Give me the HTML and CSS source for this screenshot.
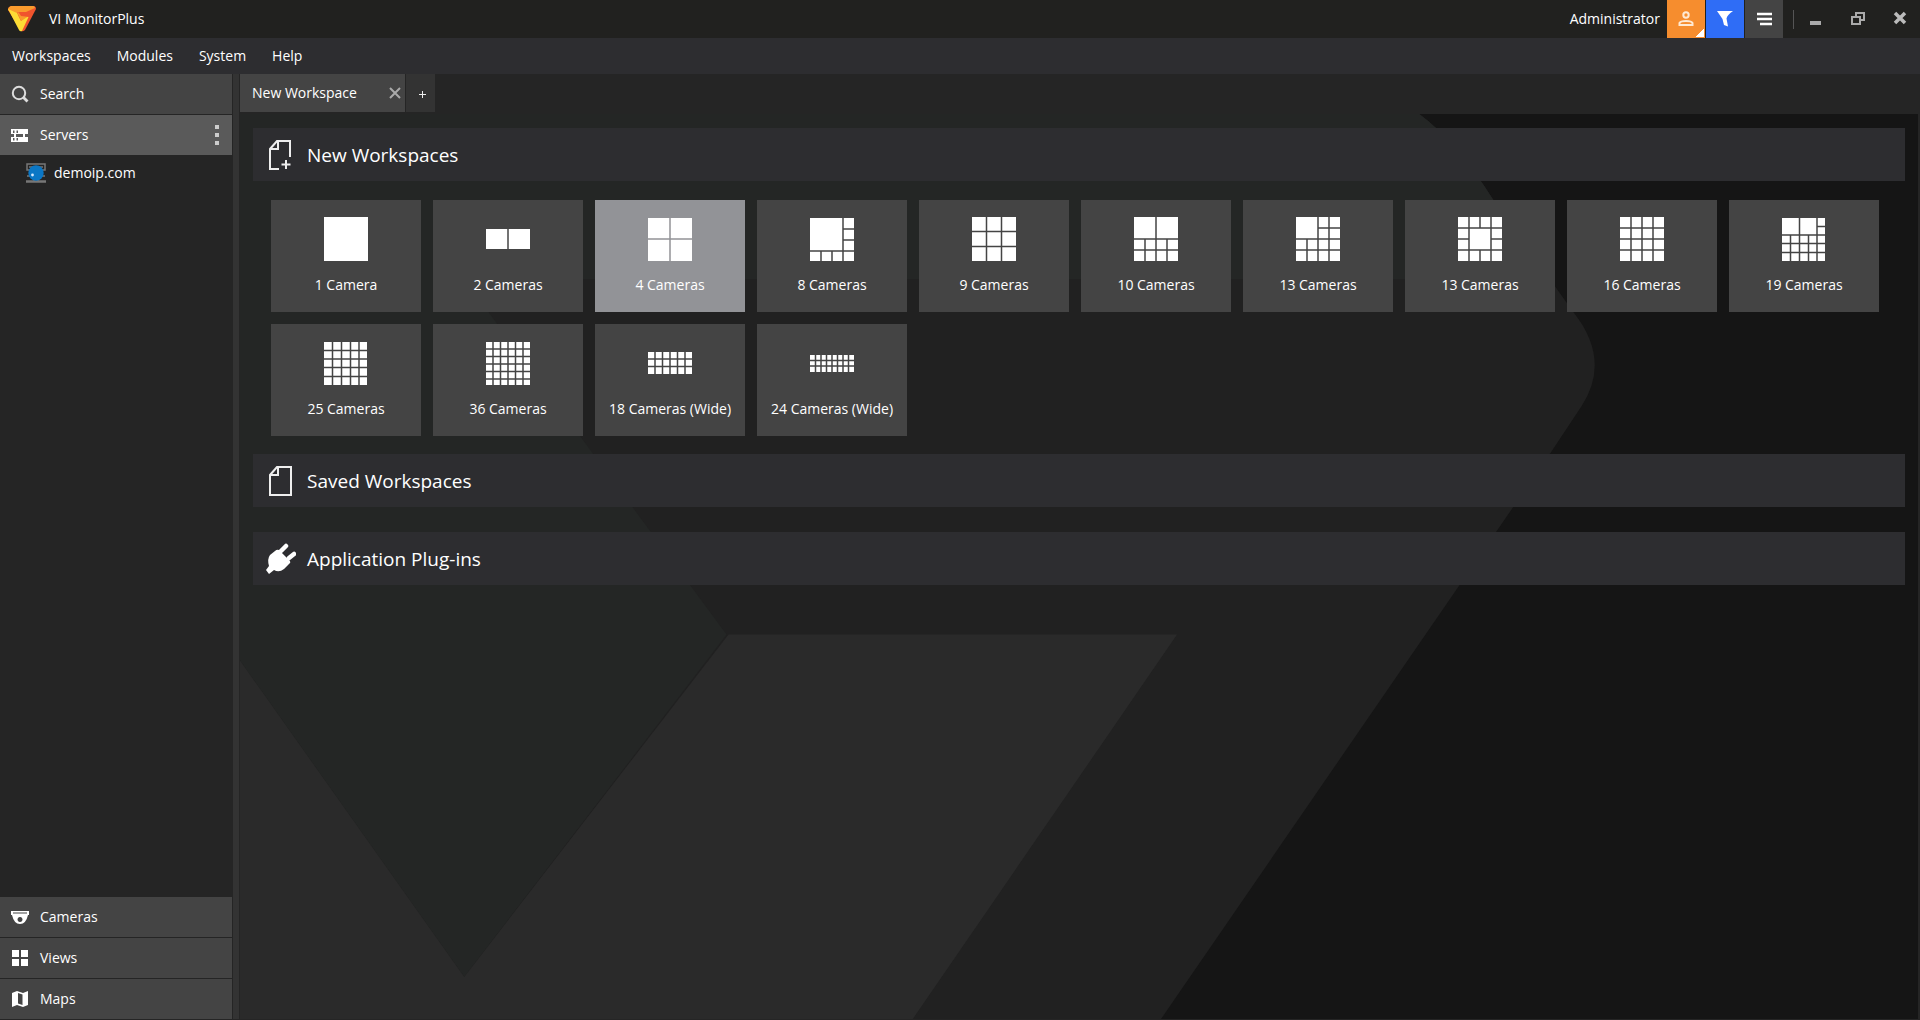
FILE: index.html
```html
<!DOCTYPE html>
<html lang="en">
<head>
<meta charset="utf-8">
<title>VI MonitorPlus</title>
<link rel="stylesheet" href="styles.css">
</head>
<body>
<div class="app">
  <header class="titlebar">
    <svg class="logo" viewBox="0 0 28 26" aria-hidden="true">
      <path fill="#f0542d" d="M3 0h22q3 0 3 3L17 24q-2 2-4 1L0 4q0-3 3-4z"/>
      <path fill="#f99b2d" d="M3 0h22q2 0 2 2L18 6H9l1 5L0 4q0-3 3-4z"/>
      <path fill="#fddc35" d="M0 3l9 4 4 8 6-5h2l-7 15q-2 1-3-1z"/>
      <path fill="#f99b2d" d="M9 6l12 4-8 5z"/>
      <path fill="#f0542d" d="M11 7h14l-4 4-8-1z"/>
    </svg>
    <h1 class="app-name">VI MonitorPlus</h1>
    <span class="user-name">Administrator</span>
    <button class="tool tool-user" aria-label="User account">
      <svg width="16" height="16" viewBox="0 0 16 16" aria-hidden="true"><g fill="none" stroke="#ffe9d2" stroke-width="2"><circle cx="8" cy="4" r="2.700"/><path d="M1.500 14v-2q1-2 6.500-2t6.500 2v2z"/></g></svg>
    </button>
    <button class="tool tool-filter" aria-label="Filter">
      <svg width="16" height="16" viewBox="0 0 16 16" aria-hidden="true"><path fill="#fff" d="M0 0h16q-6 4-6.500 7.500L11 15.500 7 14 5.500 8z"/></svg>
    </button>
    <button class="tool tool-menu" aria-label="Menu">
      <svg width="15" height="14" viewBox="0 0 15 14" aria-hidden="true"><path stroke="#fff" stroke-width="2.500" d="M0 2h15M0 7h15M3 12h12"/></svg>
    </button>
    <span class="divider"></span>
    <button class="win" aria-label="Minimize"><svg width="16" height="16" viewBox="0 0 16 16" aria-hidden="true"><path fill="#aaa" d="M2 10h11v4H2z"/></svg></button>
    <button class="win" aria-label="Restore"><svg width="16" height="16" viewBox="0 0 16 16" aria-hidden="true"><path fill="none" stroke="#aaa" stroke-width="2" d="M6 5V2h8v7h-3M2 6h8v7H2z"/></svg></button>
    <button class="win" aria-label="Close"><svg width="16" height="16" viewBox="0 0 16 16" aria-hidden="true"><path stroke="#bbb" stroke-width="3.500" d="M3 2l10 10M13 2L3 12"/></svg></button>
  </header>

  <nav class="menubar" aria-label="Main menu">
    <button>Workspaces</button>
    <button>Modules</button>
    <button>System</button>
    <button>Help</button>
  </nav>

  <div class="body">
    <aside class="sidebar">
      <button class="panel-head">
        <svg width="20" height="20" viewBox="0 0 20 20" aria-hidden="true"><g fill="none" stroke="#ddd" stroke-width="2"><circle cx="9" cy="9" r="6.200"/><path stroke-width="2.800" d="M13.500 13.500l4 4"/></g></svg>
        <span>Search</span>
      </button>
      <div class="panel-head active">
        <svg width="20" height="20" viewBox="0 0 20 20" aria-hidden="true"><path fill="#fff" fill-rule="evenodd" d="M1 4h17v5h-3v3h3v5H1v-5h3V9H1zM3 5.500V8h1.500V5.500zM6.500 5.500V8H8V5.500zM3 13v2.500h1.500V13zM6.500 13v2.500H8V13zM6 9v3h7V9z"/></svg>
        <span>Servers</span>
        <button class="more" aria-label="Servers options"><i></i><i></i><i></i></button>
      </div>
      <ul class="server-list">
        <li><a href="#">
          <svg width="20" height="20" viewBox="0 0 20 20" aria-hidden="true"><path fill="none" stroke="#777" stroke-width="1.500" d="M1 1h18v6H1zM3 4h14M1 13h18M8 15v4M12 15v4"/><path stroke="#777" stroke-width="2.500" d="M0 18.500h20"/><circle cx="10" cy="10" r="7.700" fill="#0b77c5"/><circle cx="6.500" cy="12" r="1.400" fill="#d5eaff"/></svg>
          <span>demoip.com</span></a></li>
      </ul>
      <button class="panel-head">
        <svg width="20" height="20" viewBox="0 0 20 20" aria-hidden="true"><path fill="#fff" fill-rule="evenodd" d="M1 4h18v4h-1q-2 9-8 9T2 8H1zM3 5.500v1h14v-1zM10 10a2.500 2.500 0 1 0 .01 0z"/></svg>
        <span>Cameras</span>
      </button>
      <button class="panel-head">
        <svg width="20" height="20" viewBox="0 0 20 20" aria-hidden="true"><path fill="#fff" d="M2 2h7v7H2zM11 2h7v7h-7zM2 11h7v7H2zM11 11h7v7h-7z"/></svg>
        <span>Views</span>
      </button>
      <button class="panel-head">
        <svg width="20" height="20" viewBox="0 0 20 20" aria-hidden="true"><path fill="#fff" fill-rule="evenodd" d="M2 4l5-2 6 2 5-2v14l-5 2-6-2-5 2zM8 4v10.500l4.500 1.500V5.500z"/></svg>
        <span>Maps</span>
      </button>
    </aside>
    <div class="splitter"></div>

    <div class="workspace">
      <div class="tabs">
        <div class="tab">
          <span>New Workspace</span>
          <button aria-label="Close tab"><svg width="12" height="12" viewBox="0 0 12 12" aria-hidden="true"><path stroke="#aaa" stroke-width="2" d="M1 1l10 10M11 1L1 11"/></svg></button>
        </div>
        <button class="tab-add" aria-label="New tab"><svg width="7" height="7" viewBox="0 0 7 7" aria-hidden="true"><path stroke="#eee" d="M0 3.500h7M3.500 0v7"/></svg></button>
      </div>

      <main class="pane">
        <svg class="backdrop" viewBox="0 0 1678 904" preserveAspectRatio="xMinYMin slice" aria-hidden="true">
          <path fill="#212121" d="M1178 0Q1216 28 1252 86L1332 198Q1370 246 1340 292L1308 340 920 904H0V0z"/>
          <path fill="#242625" d="M0 0h1178Q1216 28 1252 86L1310 165H224L486 520 224 862 0 546z"/>
          <path fill="#2a2a2a" d="M488 520h448L672 904H0V546L224 862z"/>
        </svg>

        <section>
          <h2>
            <svg width="32" height="32" viewBox="0 0 32 32" aria-hidden="true"><path fill="none" stroke="#eee" stroke-width="2" d="M15 30H6V10l7-8h13v16M7 10h7V3"/><path stroke="#eee" stroke-width="2" d="M22 21v9M17.500 25.500h9"/></svg>
            New Workspaces
          </h2>
          <div class="tiles">
            <button class="tile"><svg viewBox="0 0 44 44" aria-hidden="true"><path class="cells" d="M0 0h44v44H0z"/></svg>1 Camera</button>
            <button class="tile"><svg viewBox="0 0 44 44" aria-hidden="true"><path class="cells" d="M0 12h44v20H0z"/><path class="lines" d="M22 12v20"/></svg>2 Cameras</button>
            <button class="tile selected"><svg viewBox="0 0 44 44" aria-hidden="true"><path class="cells" d="M0 1h44v43H0z"/><path class="lines" d="M22 0v44M0 22h44"/></svg>4 Cameras</button>
            <button class="tile"><svg viewBox="0 0 44 44" aria-hidden="true"><path class="cells" d="M0 1h44v43H0z"/><path class="lines" d="M33 0v44M0 34h44M33 12h11M33 23h11M11 34v10M22 34v10"/></svg>8 Cameras</button>
            <button class="tile"><svg viewBox="0 0 44 44" aria-hidden="true"><path class="cells" d="M0 0h44v44H0z"/><path class="lines" d="M14.500 0v44M29.500 0v44M0 14.500h44M0 29.500h44"/></svg>9 Cameras</button>
            <button class="tile"><svg viewBox="0 0 44 44" aria-hidden="true"><path class="cells" d="M0 0h44v44H0z"/><path class="lines" d="M22 0v44M0 22h44M0 33h44M11 22v22M33 22v22"/></svg>10 Cameras</button>
            <button class="tile"><svg viewBox="0 0 44 44" aria-hidden="true"><path class="cells" d="M0 0h44v44H0z"/><path class="lines" d="M22 0v44M33 0v44M11 22v22M22 11h22M0 22h44M0 33h44"/></svg>13 Cameras</button>
            <button class="tile"><svg viewBox="0 0 44 44" aria-hidden="true"><path class="cells" d="M0 0h44v44H0z"/><path class="lines" d="M11 0v44M33 0v44M0 11h44M0 33h44M22 0v11M22 33v11M0 22h11M33 22h11"/></svg>13 Cameras</button>
            <button class="tile"><svg viewBox="0 0 44 44" aria-hidden="true"><path class="cells" d="M0 0h44v44H0z"/><path class="lines" d="M11 0v44M22 0v44M33 0v44M0 11h44M0 22h44M0 33h44"/></svg>16 Cameras</button>
            <button class="tile"><svg viewBox="0 0 44 44" aria-hidden="true"><path class="cells" d="M0 1h43v43H0z"/><path class="lines" d="M17.500 0v44M35 0v44M8.500 18v26M26.500 18v26M0 18h44M35 9.500h9M0 26.500h44M0 35.500h44"/></svg>19 Cameras</button>
            <button class="tile"><svg viewBox="0 0 44 44" aria-hidden="true"><path class="cells" d="M0 1h43v43H0z"/><path class="lines" d="M8.500 0v44M17.500 0v44M26.500 0v44M35 0v44M0 9.500h44M0 18h44M0 26.500h44M0 35.500h44"/></svg>25 Cameras</button>
            <button class="tile"><svg viewBox="0 0 44 44" aria-hidden="true"><path class="cells" d="M0 1h44v43H0z"/><path class="lines" d="M7 0v44M14.500 0v44M22 0v44M29.500 0v44M37 0v44M0 8h44M0 15.500h44M0 23h44M0 30.500h44M0 38h44"/></svg>36 Cameras</button>
            <button class="tile"><svg viewBox="0 0 44 44" aria-hidden="true"><path class="cells" d="M0 11h44v22H0z"/><path class="lines" d="M7 0v44M14.500 0v44M22 0v44M29.500 0v44M37 0v44M0 18h44M0 25.500h44"/></svg>18 Cameras (Wide)</button>
            <button class="tile"><svg viewBox="0 0 44 44" aria-hidden="true"><path class="cells" d="M0 14h44v17H0z"/><path class="lines" d="M5.500 0v44M11 0v44M16.500 0v44M22 0v44M27.500 0v44M33 0v44M38.500 0v44M0 19.500h44M0 25h44"/></svg>24 Cameras (Wide)</button>
          </div>
        </section>

        <section>
          <h2>
            <svg width="32" height="32" viewBox="0 0 32 32" aria-hidden="true"><path fill="none" stroke="#eee" stroke-width="2" d="M6 30V10l7-8h14v28zM7 10h7V3"/></svg>
            Saved Workspaces
          </h2>
        </section>

        <section>
          <h2>
            <svg width="32" height="32" viewBox="0 0 32 32" aria-hidden="true"><path fill="#fff" d="M11 8q2-2 4-1l11 11q1 2-1 3l-5 5q-5 4-10 1l-5 4-3-4 3-4Q3 16 6 12z"/><path stroke="#fff" stroke-width="4.500" stroke-linecap="round" d="M17 8l5-5M25 15l5-4"/></svg>
            Application Plug-ins
          </h2>
        </section>
      </main>
    </div>
  </div>
</div>
</body>
</html>
```
FILE: styles.css
```css
* { box-sizing: border-box; }

body {
  margin: 0;
  background: #252525;
  color: #fff;
  font: 14px/20px "Open Sans", "Noto Sans", sans-serif;
}

button {
  margin: 0;
  padding: 0;
  border: 0;
  background: none;
  color: inherit;
  font: inherit;
  cursor: pointer;
}

svg { display: block; flex: none; }

.app { display: flex; flex-direction: column; min-height: 100vh; }

/* Title bar */
.titlebar {
  display: flex;
  align-items: center;
  height: 38px;
  padding-left: 8px;
  background: #21211f;
}
.logo { width: 28px; height: 26px; }
.app-name { flex: 1; margin: 0 0 0 13px; font-size: inherit; font-weight: 400; }
.user-name { margin-right: 7px; }
.tool {
  display: flex;
  align-items: center;
  justify-content: center;
  width: 38px;
  height: 38px;
  margin-right: 1px;
}
.tool-user {
  background: linear-gradient(135deg, transparent 50%, #fff 50%) 29px 29px / 8px 8px no-repeat #f68d2e;
}
.tool-filter { background: #2f6df6; }
.tool-menu { background: #444; }
.divider { width: 1px; height: 19px; margin: 0 9px; background: #555; }
.win { display: flex; align-items: center; justify-content: center; width: 26px; height: 38px; margin-right: 16px; }
.win:last-child { margin-right: 7px; }

/* Menu bar */
.menubar { display: flex; gap: 26px; height: 36px; padding: 0 12px; background: #2d2d30; }

.body { display: flex; flex: 1; padding-bottom: 1px; }

/* Sidebar */
.sidebar { display: flex; flex-direction: column; gap: 1px; width: 232px; flex: none; }
.panel-head {
  display: flex;
  align-items: center;
  gap: 10px;
  height: 40px;
  padding: 0 10px;
  background: #444;
  text-align: left;
}
.panel-head.active { background: #5a5a5a; }
.more { display: flex; flex-direction: column; gap: 4px; margin-left: auto; padding: 0 3px; }
.more i { width: 4px; height: 4px; background: #ccc; }
.server-list { flex: 1; margin: 0; padding: 7px 0 0 26px; list-style: none; }
.server-list a { display: flex; align-items: center; gap: 8px; color: inherit; text-decoration: none; }
.splitter { width: 6px; margin: 0 1px; flex: none; background: #333; }

/* Tabs */
.workspace { display: flex; flex-direction: column; flex: 1; min-width: 0; padding-right: 2px; }
.tabs { display: flex; gap: 1px; height: 40px; padding-bottom: 2px; }
.tab { display: flex; align-items: center; justify-content: space-between; width: 165px; padding: 0 4px 0 12px; background: #444; }
.tab-add { display: flex; align-items: center; justify-content: center; width: 29px; padding: 2px 0 0 4px; background: #333; }

/* Start page */
.pane {
  position: relative;
  display: flex;
  flex-direction: column;
  flex: 1;
  padding: 14px 13px;
  background: #151515;
}
.backdrop { position: absolute; inset: 0; width: 100%; height: 100%; }
section { position: relative; margin-bottom: 25px; }
section:first-of-type { margin-bottom: 18px; }
h2 {
  display: flex;
  align-items: center;
  gap: 11px;
  height: 53px;
  margin: 0;
  padding: 0 11px;
  background: #2d2d30;
  font-size: 19px;
  font-weight: 400;
}
.tiles { display: flex; flex-wrap: wrap; gap: 12px; padding: 19px 18px 0; }
.tile {
  --face: #444;
  display: flex;
  flex-direction: column;
  align-items: center;
  gap: 14px;
  width: 150px;
  height: 112px;
  padding-top: 17px;
  background: var(--face);
  white-space: nowrap;
}
.tile.selected { --face: #929397; }
.tile svg { width: 44px; height: 44px; }
.cells { fill: #fff; }
.lines { fill: none; stroke: var(--face); stroke-width: 1.5px; }
```
